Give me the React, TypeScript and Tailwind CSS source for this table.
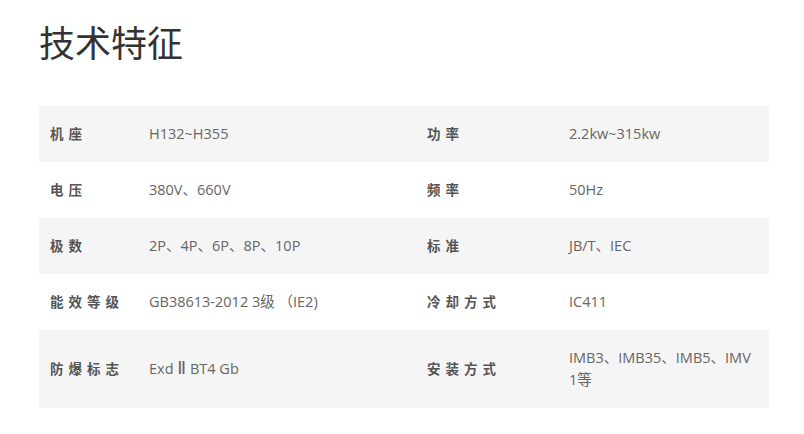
import React from "react";

const rows: [string, React.ReactNode, string, string][] = [
  ["机座", "H132~H355", "功率", "2.2kw~315kw"],
  ["电压", "380V、660V", "频率", "50Hz"],
  ["极数", "2P、4P、6P、8P、10P", "标准", "JB/T、IEC"],
  ["能效等级", "GB38613-2012 3级 （IE2)", "冷却方式", "IC411"],
  [
    "防爆标志",
    <>
      Exd{" "}
      <span
        style={{ fontFamily: '"DejaVu Sans", sans-serif' }}
        className="text-[18px] leading-[0]"
      >
        Ⅱ
      </span>{" "}
      BT4 Gb
    </>,
    "安装方式",
    "IMB3、IMB35、IMB5、IMV1等",
  ],
];

export default function App() {
  return (
    <div
      className="w-[804px] h-[434px] bg-white pl-[39px] pt-[20px]"
      style={{ fontFamily: '"Open Sans", "Noto Sans CJK SC", sans-serif' }}
    >
      <h1 className="text-[36px] leading-[48px] font-normal text-[#333]">
        技术特征
      </h1>

      <table className="mt-[38px] w-[730px] table-fixed border-collapse">
        <colgroup>
          <col className="w-[99px]" />
          <col className="w-[278px]" />
          <col className="w-[142px]" />
          <col className="w-[211px]" />
        </colgroup>
        <tbody>
          {rows.map((r, i) => (
            <tr
              key={i}
              className={i % 2 === 0 ? "bg-[#f5f5f5]" : "bg-white"}
            >
              <td className="pl-[11px] py-[17px] text-[13.5px] leading-[22px] font-bold tracking-[5px] text-[#555] align-middle whitespace-nowrap">
                {r[0]}
              </td>
              <td className="pl-[11px] pr-[12px] py-[17px] text-[14.5px] leading-[22px] text-[#666] align-middle">
                {r[1]}
              </td>
              <td className="pl-[11px] py-[17px] text-[13.5px] leading-[22px] font-bold tracking-[5px] text-[#555] align-middle whitespace-nowrap">
                {r[2]}
              </td>
              <td className="pl-[11px] pr-[14px] py-[17px] text-[14.5px] leading-[22px] text-[#666] align-middle break-all">
                {r[3]}
              </td>
            </tr>
          ))}
        </tbody>
      </table>
    </div>
  );
}
